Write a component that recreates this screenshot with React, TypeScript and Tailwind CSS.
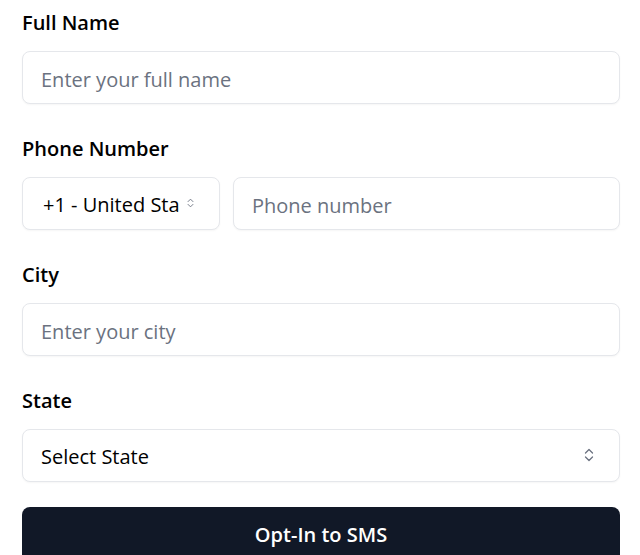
import React from "react";

const font = { fontFamily: '"Open Sans", "Noto Sans", sans-serif' };

const Chevrons = ({ className }: { className?: string }) => (
  <svg viewBox="0 0 10 14" className={className} fill="none" stroke="currentColor" strokeWidth="1.3" strokeLinecap="round" strokeLinejoin="round">
    <path d="M1.5 5 5 1.5 8.5 5" />
    <path d="M1.5 9 5 12.5 8.5 9" />
  </svg>
);

const Label = ({ children }: { children: React.ReactNode }) => (
  <label className="block text-[20px] leading-7 font-semibold text-black mb-[14px]">{children}</label>
);

const inputCls =
  "w-full h-[53px] rounded-lg border border-[#e5e7eb] bg-white px-[18px] pt-[3px] text-[20px] text-black placeholder:text-[#6b7280] shadow-[0_1px_2px_rgba(0,0,0,0.04)] outline-none";

export default function App() {
  return (
    <div className="w-[640px] h-[555px] overflow-hidden bg-white pl-[22px] pr-[20px] pt-[9px]" style={font}>
      <form className="flex flex-col gap-[31px]" onSubmit={(e) => e.preventDefault()}>
        <div>
          <Label>Full Name</Label>
          <input className={inputCls} placeholder="Enter your full name" />
        </div>

        <div>
          <Label>Phone Number</Label>
          <div className="flex gap-[13px]">
            <div className="relative w-[198px] shrink-0">
              <select className={`${inputCls} appearance-none pl-[20px] pr-[40px]`} defaultValue="us">
                <option value="us">+1 - United States</option>
              </select>
              <Chevrons className="absolute right-[26px] top-[20px] w-[7px] h-[12px] text-[#6b7280] pointer-events-none" />
            </div>
            <input className={inputCls} placeholder="Phone number" />
          </div>
        </div>

        <div>
          <Label>City</Label>
          <input className={inputCls} placeholder="Enter your city" />
        </div>

        <div>
          <Label>State</Label>
          <div className="relative">
            <select className={`${inputCls} appearance-none`} defaultValue="">
              <option value="">Select State</option>
            </select>
            <Chevrons className="absolute right-[26px] top-[19px] w-[10px] h-[14px] text-[#6b7280] pointer-events-none" />
          </div>
        </div>

        <button
          type="submit"
          className="w-full h-[56px] -mt-[6px] rounded-lg bg-[#111827] text-white text-[20px] font-semibold"
        >
          Opt-In to SMS
        </button>
      </form>
    </div>
  );
}
